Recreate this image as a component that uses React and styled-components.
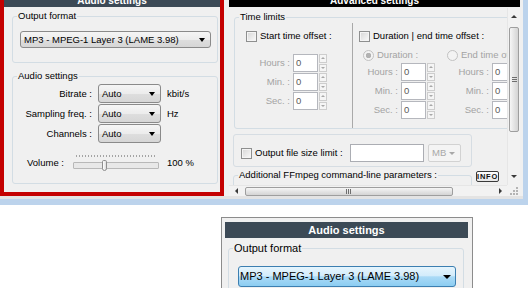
import { Fragment } from "react";
import styled, { createGlobalStyle } from "styled-components";

const GlobalStyle = createGlobalStyle`
  html, body {
    margin: 0;
    padding: 0;
    height: 288px;
    overflow: hidden;
    background: #ffffff;
  }
  body {
    font-family: "Liberation Sans", Arial, sans-serif;
    color: #000;
  }
`;

const TopWindow = styled.div`
  display: flex;
  height: 215px;
  margin-top: -10px;
  box-sizing: border-box;
  padding-bottom: 3px;
  background: #e3e3e3;
  border-bottom: 6px solid #bcd3ec;
  border-right: 5px solid #bcd3ec;
  font-size: 9.5px;
  line-height: 12px;
`;

const LeftPanel = styled.section`
  width: 224px;
  flex: none;
  box-sizing: border-box;
  border: 4px solid #c40000;
  background: #f0f0f0;
  display: flex;
  flex-direction: column;
`;

const RightPanel = styled.section`
  flex: 1;
  min-width: 0;
  padding: 4px 3px 0 5px;
  background: #f0f0f0;
  display: flex;
  flex-direction: column;
`;

const PanelHeader = styled.div`
  height: ${(p) => p.$h || 13}px;
  flex: none;
  overflow: hidden;
  background: ${(p) => (p.$black ? "#000000" : "#3c4a56")};
  color: #ffffff;
  font-weight: bold;
  font-size: ${(p) => p.$size || 10}px;
  line-height: ${(p) => p.$lh || 14}px;
  text-align: center;
`;

const Group = styled.fieldset`
  margin: ${(p) => p.$margin || "0"};
  padding: 0;
  width: ${(p) => (p.$width ? `${p.$width}px` : "auto")};
  min-height: ${(p) => (p.$minh ? `${p.$minh}px` : "0")};
  box-sizing: border-box;
  flex: none;
  border: 1px solid #d3dde4;
  border-radius: 3px;
  min-width: 0;
`;

const Caption = styled.legend`
  margin-left: 4px;
  padding: 0 1px;
  line-height: ${(p) => p.$lh || 12}px;
`;

const GroupBody = styled.div`
  padding: ${(p) => p.$pad};
`;

const Combo = styled.div`
  display: flex;
  align-items: center;
  justify-content: space-between;
  height: ${(p) => p.$height || 17}px;
  box-sizing: border-box;
  padding: 0 5px 0 3px;
  border: 1px solid #8a8a8a;
  border-radius: 3px;
  background: linear-gradient(#f5f5f5, #ececec 50%, #dedede 51%, #d6d6d6);
  color: #000;
`;

const Arrow = styled.span`
  width: 0;
  height: 0;
  border-left: ${(p) => p.$w || 3}px solid transparent;
  border-right: ${(p) => p.$w || 3}px solid transparent;
  border-top: ${(p) => p.$t || 4}px solid ${(p) => p.$color || "#000"};
`;

const AudioGrid = styled.div`
  display: grid;
  grid-template-columns: 72px 63px auto;
  grid-auto-rows: 19px;
  column-gap: 6px;
  row-gap: 1px;
  align-items: center;
`;

const RightLabel = styled.span`
  text-align: right;
  white-space: nowrap;
`;

const VolumeRow = styled.div`
  display: flex;
  align-items: center;
  margin: 12px 0 0 7px;
  height: 16px;
`;

const VolumeLabel = styled.span`
  width: 46px;
  flex: none;
`;

const Slider = styled.div`
  position: relative;
  width: 86px;
  height: 16px;
  flex: none;
  margin-right: 8px;
  display: flex;
  flex-direction: column;
`;

const Ticks = styled.div`
  height: 2px;
  margin: 0 2px 0 3px;
  background: repeating-linear-gradient(90deg, #a4a4a4 0 1px, transparent 1px 3px);
`;

const Track = styled.div`
  height: 7px;
  margin-top: 5px;
  box-sizing: border-box;
  border: 1px solid #b8b8b8;
  border-radius: 1px;
  background: #e8e8e8;
`;

const Thumb = styled.div`
  position: absolute;
  left: 29px;
  top: 5px;
  width: 5px;
  height: 11px;
  box-sizing: border-box;
  border: 1px solid #8e8e8e;
  border-radius: 2px 2px 3px 3px;
  background: linear-gradient(90deg, #ffffff, #dcdcdc);
`;

const ScrollView = styled.div`
  display: grid;
  grid-template-columns: 1fr 13px;
  grid-template-rows: 177px 11px;
  margin-top: 1px;
`;

const Viewport = styled.div`
  overflow: hidden;
  min-width: 0;
`;

const Columns = styled.div`
  display: flex;
`;

const LeftCol = styled.div`
  width: 118px;
  flex: none;
  padding: 7px 0 9px 11px;
  box-sizing: border-box;
  border-right: 1px solid #a9a9a9;
`;

const RightCol = styled.div`
  flex: 1;
  padding: 7px 0 9px 0;
`;

const CheckRow = styled.div`
  display: flex;
  align-items: center;
  gap: 3px;
  height: 12px;
  margin-left: ${(p) => p.$ml || 0}px;
  width: ${(p) => (p.$width ? `${p.$width}px` : "auto")};
  flex: none;
  white-space: nowrap;
`;

const CheckBox = styled.span`
  width: 11px;
  height: 11px;
  flex: none;
  box-sizing: border-box;
  border: 1px solid #8e8f8f;
  background: linear-gradient(135deg, #d6d6d6, #fafafa);
  box-shadow: inset 0 0 0 1px #f4f4f4;
`;

const SubCols = styled.div`
  display: flex;
  margin-top: 7px;
`;

const SubCol = styled.div`
  width: ${(p) => (p.$width ? `${p.$width}px` : "auto")};
  flex: none;
`;

const RadioRow = styled.div`
  display: flex;
  align-items: center;
  gap: 3px;
  height: 12px;
  padding-left: ${(p) => p.$pl || 0}px;
  color: #a3a3a3;
  white-space: nowrap;
`;

const Radio = styled.span`
  width: 11px;
  height: 11px;
  flex: none;
  box-sizing: border-box;
  border-radius: 50%;
  border: 1px solid #c2c2c2;
  background: ${(p) =>
    p.$on
      ? "radial-gradient(circle, #b2b2b2 0 2.5px, #f3f3f3 3px)"
      : "#f3f3f3"};
`;

const SpinStack = styled.div`
  display: flex;
  flex-direction: column;
  gap: 1px;
  margin-top: ${(p) => p.$mt}px;
`;

const SpinRow = styled.div`
  display: flex;
  align-items: center;
  height: 18px;
`;

const SpinLabel = styled.span`
  width: ${(p) => p.$w}px;
  flex: none;
  margin-right: 3px;
  text-align: right;
  color: #a3a3a3;
  white-space: nowrap;
`;

const NumBox = styled.div`
  width: 25px;
  height: 18px;
  flex: none;
  box-sizing: border-box;
  border: 1px solid #b5b7bd;
  background: #ffffff;
  color: #5a5a5a;
  padding-left: 2px;
  line-height: 16px;
`;

const Spinner = styled.div`
  width: 8px;
  height: 18px;
  flex: none;
  margin-left: 1px;
  display: flex;
  flex-direction: column;
  gap: 1px;
`;

const SpinHalf = styled.div`
  flex: 1;
  box-sizing: border-box;
  border: 1px solid #cdcdcd;
  background: #f5f5f5;
  display: flex;
  align-items: center;
  justify-content: center;

  &::after {
    content: "";
    border-left: 2px solid transparent;
    border-right: 2px solid transparent;
    border-${(p) => (p.$down ? "top" : "bottom")}: 2px solid #a8a8a8;
  }
`;

const SizeBox = styled.div`
  width: 239px;
  margin: 5px 0 0 4px;
  box-sizing: border-box;
  border: 1px solid #d6dde3;
  border-radius: 3px;
  padding: 9px 0 4px 7px;
  display: flex;
  align-items: center;
`;

const TextBox = styled.div`
  width: 74px;
  height: 18px;
  flex: none;
  box-sizing: border-box;
  border: 1px solid #abadb3;
  background: #ffffff;
`;

const UnitCombo = styled.div`
  width: 33px;
  height: 18px;
  flex: none;
  margin-left: 4px;
  box-sizing: border-box;
  border: 1px solid #d2d2d2;
  border-radius: 2px;
  background: #f4f4f4;
  color: #a8a8a8;
  display: flex;
  align-items: center;
  justify-content: space-between;
  padding: 0 5px 0 3px;
`;

const BottomRow = styled.div`
  display: flex;
  align-items: flex-start;
  margin: 2px 0 0 4px;
`;

const InfoButton = styled.div`
  margin: 2px 0 0 4px;
  width: 23px;
  height: 11px;
  flex: none;
  box-sizing: border-box;
  border: 1px solid #3a3a3a;
  border-radius: 2px;
  background: linear-gradient(#ffffff, #e6e6e6);
  font-size: 7.5px;
  font-weight: bold;
  letter-spacing: 0.8px;
  line-height: 9px;
  text-align: center;
  color: #111;
`;

const VScroll = styled.div`
  display: flex;
  flex-direction: column;
  background: #f2f2f2;
  border-left: 1px solid #e6e6e6;
`;

const ArrowCell = styled.div`
  height: ${(p) => p.$h || 11}px;
  width: ${(p) => (p.$w ? `${p.$w}px` : "auto")};
  flex: none;
  margin-top: ${(p) => (p.$end ? "auto" : "0")};
  display: flex;
  align-items: center;
  justify-content: center;
`;

const Tri = styled.span`
  width: 0;
  height: 0;
  ${(p) =>
    p.$dir === "up" || p.$dir === "down"
      ? `border-left: 3px solid transparent; border-right: 3px solid transparent;
         border-${p.$dir === "up" ? "bottom" : "top"}: 3px solid #3a3a3a;`
      : `border-top: 3px solid transparent; border-bottom: 3px solid transparent;
         border-${p.$dir === "left" ? "right" : "left"}: 3px solid #3a3a3a;`}
`;

const VThumb = styled.div`
  margin: 3px 1px 0;
  height: 105px;
  flex: none;
  box-sizing: border-box;
  border: 1px solid #9e9e9e;
  border-radius: 2px;
  background: linear-gradient(90deg, #f6f6f6, #e4e4e4 50%, #d4d4d4);
  display: flex;
  align-items: center;
  justify-content: center;
`;

const Grip = styled.span`
  width: ${(p) => (p.$h ? 6 : 5)}px;
  height: 5px;
  background: ${(p) =>
    p.$h
      ? "repeating-linear-gradient(90deg, #6e6e6e 0 1px, transparent 1px 2px)"
      : "repeating-linear-gradient(#6e6e6e 0 1px, transparent 1px 2px)"};
`;

const HScroll = styled.div`
  display: flex;
  align-items: center;
  background: #f2f2f2;
  border-top: 1px solid #e6e6e6;
  box-sizing: border-box;
`;

const HThumb = styled.div`
  margin-left: 2px;
  width: 208px;
  height: 9px;
  flex: none;
  box-sizing: border-box;
  border: 1px solid #9e9e9e;
  border-radius: 2px;
  background: linear-gradient(#f6f6f6, #e4e4e4 50%, #d4d4d4);
  display: flex;
  align-items: center;
  justify-content: center;
`;

const Spacer = styled.div`
  flex: 1;
`;

const SizeGrip = styled.div`
  background: #f2f2f2;
  display: flex;
  align-items: flex-end;
  justify-content: flex-end;
  padding: 0 2px 1px 0;
`;

const LowerPanel = styled.section`
  margin: 12px 0 0 221px;
  width: 252px;
  height: 90px;
  box-sizing: border-box;
  border: 1px solid #8c8c8c;
  background: #f0f0f0;
  padding: 4px 4px 0 3px;
  font-size: 11px;
  line-height: 13px;
`;

const BlueSelect = styled.div`
  height: 21px;
  box-sizing: border-box;
  border: 1px solid #3c7fb1;
  border-radius: 3px;
  background: linear-gradient(#e6f5fd, #d3ecfb 45%, #aadaf6 52%, #8ccdf2);
  display: flex;
  align-items: center;
  justify-content: space-between;
  padding: 0 4px 0 1px;
  white-space: nowrap;
`;

const spinLabels = ["Hours :", "Min. :", "Sec. :"];

const SpinGroup = ({ labelWidth, mt }) => (
  <SpinStack $mt={mt}>
    {spinLabels.map((l) => (
      <SpinRow key={l}>
        <SpinLabel $w={labelWidth}>{l}</SpinLabel>
        <NumBox>0</NumBox>
        <Spinner>
          <SpinHalf />
          <SpinHalf $down />
        </Spinner>
      </SpinRow>
    ))}
  </SpinStack>
);

const audioRows = [
  ["Bitrate :", "kbit/s"],
  ["Sampling freq. :", "Hz"],
  ["Channels :", ""],
];

const gripDots = [
  [6, 0],
  [6, 3],
  [3, 3],
  [6, 6],
  [3, 6],
  [0, 6],
];

export default function App() {
  return (
    <>
      <GlobalStyle />
      <TopWindow>
        <LeftPanel>
          <PanelHeader>Audio settings</PanelHeader>
          <Group $margin="3px 2px 0 8px">
            <Caption>Output format</Caption>
            <GroupBody $pad="9px 6px 14px 7px">
              <Combo>
                <span>MP3 - MPEG-1 Layer 3 (LAME 3.98)</span>
                <Arrow />
              </Combo>
            </GroupBody>
          </Group>
          <Group $margin="7px 2px 0 8px">
            <Caption>Audio settings</Caption>
            <GroupBody $pad="2px 6px 12px 7px">
              <AudioGrid>
                {audioRows.map(([label, unit]) => (
                  <Fragment key={label}>
                    <RightLabel>{label}</RightLabel>
                    <Combo $height={19}>
                      <span>Auto</span>
                      <Arrow />
                    </Combo>
                    <span>{unit}</span>
                  </Fragment>
                ))}
              </AudioGrid>
              <VolumeRow>
                <VolumeLabel>Volume :</VolumeLabel>
                <Slider>
                  <Ticks />
                  <Track />
                  <Thumb />
                </Slider>
                <span>100 %</span>
              </VolumeRow>
            </GroupBody>
          </Group>
        </LeftPanel>

        <RightPanel>
          <PanelHeader $black>Advanced settings</PanelHeader>
          <ScrollView>
            <Viewport>
              <Group $margin="3px 0 0 5px" $width={310}>
                <Caption>Time limits</Caption>
                <Columns>
                  <LeftCol>
                    <CheckRow>
                      <CheckBox />
                      Start time offset :
                    </CheckRow>
                    <SpinGroup labelWidth={44} mt={12} />
                  </LeftCol>
                  <RightCol>
                    <CheckRow $ml={6}>
                      <CheckBox />
                      Duration | end time offset :
                    </CheckRow>
                    <SubCols>
                      <SubCol $width={94}>
                        <RadioRow $pl={10}>
                          <Radio $on />
                          Duration :
                        </RadioRow>
                        <SpinGroup labelWidth={45} mt={2} />
                      </SubCol>
                      <SubCol>
                        <RadioRow>
                          <Radio />
                          End time offset :
                        </RadioRow>
                        <SpinGroup labelWidth={42} mt={2} />
                      </SubCol>
                    </SubCols>
                  </RightCol>
                </Columns>
              </Group>

              <SizeBox>
                <CheckRow $width={109}>
                  <CheckBox />
                  Output file size limit :
                </CheckRow>
                <TextBox />
                <UnitCombo>
                  <span>MB</span>
                  <Arrow $color="#a8a8a8" $w={3} $t={3} />
                </UnitCombo>
              </SizeBox>

              <BottomRow>
                <Group $width={239} $minh={30}>
                  <Caption>Additional FFmpeg command-line parameters :</Caption>
                </Group>
                <InfoButton>INFO</InfoButton>
              </BottomRow>
            </Viewport>

            <VScroll>
              <ArrowCell $h={16}>
                <Tri $dir="up" />
              </ArrowCell>
              <VThumb>
                <Grip />
              </VThumb>
              <ArrowCell $h={17} $end>
                <Tri $dir="down" />
              </ArrowCell>
            </VScroll>

            <HScroll>
              <ArrowCell $w={14}>
                <Tri $dir="left" />
              </ArrowCell>
              <HThumb>
                <Grip $h />
              </HThumb>
              <Spacer />
              <ArrowCell $w={14}>
                <Tri $dir="right" />
              </ArrowCell>
            </HScroll>

            <SizeGrip>
              <svg width="8" height="8" viewBox="0 0 8 8">
                {gripDots.map(([x, y]) => (
                  <rect key={`${x}-${y}`} x={x} y={y} width="2" height="2" fill="#b4b4b4" />
                ))}
              </svg>
            </SizeGrip>
          </ScrollView>
        </RightPanel>
      </TopWindow>

      <LowerPanel>
        <PanelHeader $h={16} $size={11} $lh={16}>
          Audio settings
        </PanelHeader>
        <Group $margin="4px 4px 0 3px">
          <Caption $lh={13}>Output format</Caption>
          <GroupBody $pad="11px 7px 20px 9px">
            <BlueSelect>
              <span>MP3 - MPEG-1 Layer 3 (LAME 3.98)</span>
              <Arrow $w={4} $t={4} />
            </BlueSelect>
          </GroupBody>
        </Group>
      </LowerPanel>
    </>
  );
}
